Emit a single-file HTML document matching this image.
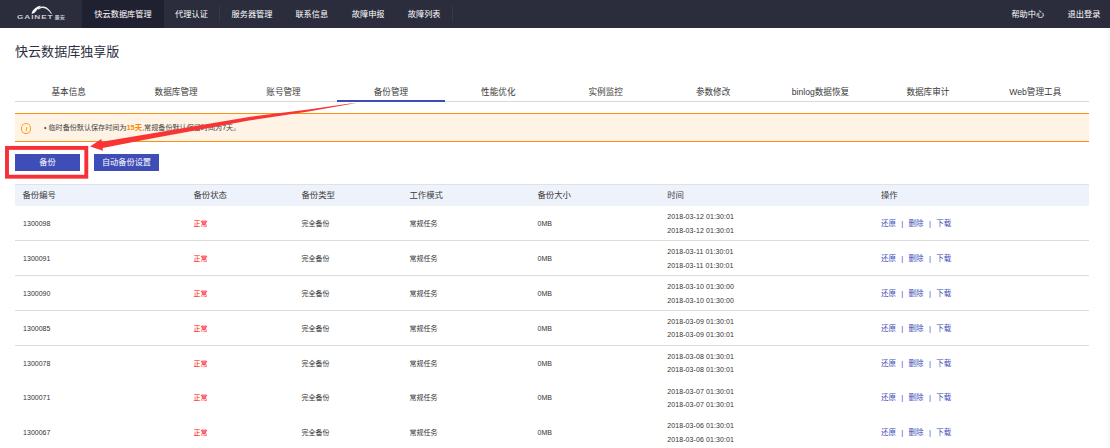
<!DOCTYPE html><html lang="zh"><head><meta charset="utf-8"><title>快云数据库独享版</title><style>
*{margin:0;padding:0;box-sizing:border-box}
html,body{width:1110px;height:448px;overflow:hidden;background:#fff}
body{position:relative;font-family:"Liberation Sans","Noto Sans CJK SC",sans-serif;color:#333;font-size:7px}
.abs{position:absolute;white-space:nowrap}
#nav{position:absolute;left:0;top:0;width:1110px;height:27.75px;background:#2b2d3c}
#nav .it{position:absolute;top:0;height:27.75px;line-height:30.6px;color:#fff;font-size:8.2px;text-align:center}
#nav .it.on{background:#1f2030}
#nav .sep{position:absolute;top:6px;height:16px;width:1px;background:#363849}
#title{left:15px;top:41.7px;font-size:13.05px;line-height:20px;color:#2c2f3e}
#tabs{position:absolute;left:15px;top:82px;width:1074px;height:19.8px;border-bottom:1px solid #d9d9d9}
#tabs .t{position:absolute;top:0;height:19.8px;line-height:21px;width:107.4px;text-align:center;font-size:8.6px;color:#3a3a3a}
#tabs .t.on{border-bottom:2.3px solid #3d4bb8;height:20px}
#alert{position:absolute;left:15px;top:113px;width:1074px;height:29px;background:#fef3e5;border-top:1px solid #fb8f10;border-bottom:1px solid #fb8f10}
#alert .ic{position:absolute;left:6.2px;top:9.4px;width:10px;height:10.4px;border:1px solid #ff9a14;border-radius:50%}
#alert .ic i{position:absolute;left:3.6px;top:2.2px;width:0.9px;height:4.2px;background:#ff9a14;transform:skewX(-12deg)}
#alert .tx{position:absolute;left:29px;top:-0.6px;line-height:29px;font-size:7.1px;color:#444}
#alert .tx b{color:#ff8a00;font-weight:bold;font-size:7.4px}
.btn{position:absolute;top:154px;height:17px;width:65px;background:#3f4db7;color:#fff;font-size:8.2px;line-height:17.9px;text-align:center}
#thead{position:absolute;left:15px;top:183.5px;width:1074px;height:22.1px;background:#eef2fb;border-top:0.6px solid #dde1ea}
.th{position:absolute;top:184.4px;line-height:22px;font-size:8.4px;color:#3c3c3c}
.td{position:absolute;font-size:7px;line-height:12px;color:#333}
.tm{letter-spacing:0.1px}
.red{color:#f00}
.lnk{color:#3d4bb8}
.op{font-size:7.5px}
.op span{display:inline-block;width:15px}
.op i{display:inline-block;width:12.6px;text-align:center;font-style:normal}
.hr{position:absolute;left:15px;width:1074px;height:1px;background:#dcdcdc}
</style></head><body>
<div id="nav">
<svg class="abs" style="left:0;top:0" width="82" height="28" viewBox="0 0 82 28"><path d="M31.6 13.2 C32.2 11.4 33 10 34 9.3 C35.2 7.8 37.4 6.3 40.6 5.7 C40.8 6.2 40.4 6.9 39.6 7.4 C38.4 8.2 37.6 9 37 9.8 C36.4 10.6 35.9 11.4 35.3 12 C34.4 13 33.2 13.7 32.2 13.8 C31.7 13.8 31.5 13.6 31.6 13.2Z" fill="#fafafc"/><path d="M37.6 8.7 C39.6 7 41.6 6.4 43.6 6.5 C45.2 6.6 46.4 7.3 47.6 8.3 C49.4 9.8 51 11.8 51.9 13.7 L51.2 13.9 C50 12.2 48.8 10.8 47.4 9.8 C46 8.8 44.6 8.2 43 8 C41.4 7.9 39.8 8.6 38.4 9.7Z" fill="#ececf0"/><text x="17" y="19" font-family="Liberation Sans, sans-serif" font-size="5.6" font-weight="bold" fill="#c8c8d0" letter-spacing="0.6" textLength="36.5" lengthAdjust="spacingAndGlyphs">GAINET</text><text x="54.5" y="18.8" font-family="Noto Sans CJK SC, sans-serif" font-size="5" font-weight="bold" fill="#c8c8d0" textLength="10.5" lengthAdjust="spacingAndGlyphs">景安</text></svg>
<div class="it on" style="left:82px;width:82px">快云数据库管理</div>
<div class="it" style="left:164px;width:55px">代理认证</div>
<div class="it" style="left:219.5px;width:65px">服务器管理</div>
<div class="it" style="left:284.5px;width:54.6px">联系信息</div>
<div class="it" style="left:340.2px;width:56px">故障申报</div>
<div class="it" style="left:396.2px;width:56px">故障列表</div>
<div class="sep" style="left:219px"></div><div class="sep" style="left:452px"></div>
<div class="it" style="left:1006.8px;width:42px">帮助中心</div><div class="it" style="left:1063px;width:42px">退出登录</div>
</div>
<div id="title" class="abs">快云数据库独享版</div>
<div id="tabs">
<div class="t" style="left:0.0px">基本信息</div>
<div class="t" style="left:107.4px">数据库管理</div>
<div class="t" style="left:214.8px">账号管理</div>
<div class="t on" style="left:322.2px">备份管理</div>
<div class="t" style="left:429.6px">性能优化</div>
<div class="t" style="left:537.0px">实例监控</div>
<div class="t" style="left:644.4px">参数修改</div>
<div class="t" style="left:751.8px">binlog数据恢复</div>
<div class="t" style="left:859.2px">数据库审计</div>
<div class="t" style="left:966.6px">Web管理工具</div>
</div>
<div id="alert"><div class="ic"><i></i></div><div class="tx">•&nbsp;临时备份默认保存时间为<b>15天</b>,常规备份默认保留时间为7天。</div></div>
<div class="btn" style="left:15px">备份</div><div class="btn" style="left:94px">自动备份设置</div>
<div id="thead"></div>
<div class="th abs" style="left:22.5px">备份编号</div>
<div class="th abs" style="left:193.5px">备份状态</div>
<div class="th abs" style="left:301.5px">备份类型</div>
<div class="th abs" style="left:409.5px">工作模式</div>
<div class="th abs" style="left:537.5px">备份大小</div>
<div class="th abs" style="left:667.2px">时间</div>
<div class="th abs" style="left:881px">操作</div>
<div class="td abs" style="left:23.1px;top:218.1px">1300098</div>
<div class="td abs red" style="left:193.5px;top:218.1px">正常</div>
<div class="td abs" style="left:301.5px;top:218.1px">完全备份</div>
<div class="td abs" style="left:409.5px;top:218.1px">常规任务</div>
<div class="td abs" style="left:537.5px;top:218.1px">0MB</div>
<div class="td abs tm" style="left:667.2px;top:211.3px">2018-03-12 01:30:01</div>
<div class="td abs tm" style="left:667.2px;top:224.8px">2018-03-12 01:30:01</div>
<div class="td abs lnk op" style="left:881px;top:218.1px"><span>还原</span><i>|</i><span>删除</span><i>|</i><span>下载</span></div>
<div class="hr" style="top:239.9px"></div>
<div class="td abs" style="left:23.1px;top:253.0px">1300091</div>
<div class="td abs red" style="left:193.5px;top:253.0px">正常</div>
<div class="td abs" style="left:301.5px;top:253.0px">完全备份</div>
<div class="td abs" style="left:409.5px;top:253.0px">常规任务</div>
<div class="td abs" style="left:537.5px;top:253.0px">0MB</div>
<div class="td abs tm" style="left:667.2px;top:246.2px">2018-03-11 01:30:01</div>
<div class="td abs tm" style="left:667.2px;top:259.7px">2018-03-11 01:30:01</div>
<div class="td abs lnk op" style="left:881px;top:253.0px"><span>还原</span><i>|</i><span>删除</span><i>|</i><span>下载</span></div>
<div class="hr" style="top:274.8px"></div>
<div class="td abs" style="left:23.1px;top:287.8px">1300090</div>
<div class="td abs red" style="left:193.5px;top:287.8px">正常</div>
<div class="td abs" style="left:301.5px;top:287.8px">完全备份</div>
<div class="td abs" style="left:409.5px;top:287.8px">常规任务</div>
<div class="td abs" style="left:537.5px;top:287.8px">0MB</div>
<div class="td abs tm" style="left:667.2px;top:281.0px">2018-03-10 01:30:00</div>
<div class="td abs tm" style="left:667.2px;top:294.5px">2018-03-10 01:30:00</div>
<div class="td abs lnk op" style="left:881px;top:287.8px"><span>还原</span><i>|</i><span>删除</span><i>|</i><span>下载</span></div>
<div class="hr" style="top:309.6px"></div>
<div class="td abs" style="left:23.1px;top:322.7px">1300085</div>
<div class="td abs red" style="left:193.5px;top:322.7px">正常</div>
<div class="td abs" style="left:301.5px;top:322.7px">完全备份</div>
<div class="td abs" style="left:409.5px;top:322.7px">常规任务</div>
<div class="td abs" style="left:537.5px;top:322.7px">0MB</div>
<div class="td abs tm" style="left:667.2px;top:315.9px">2018-03-09 01:30:01</div>
<div class="td abs tm" style="left:667.2px;top:329.4px">2018-03-09 01:30:01</div>
<div class="td abs lnk op" style="left:881px;top:322.7px"><span>还原</span><i>|</i><span>删除</span><i>|</i><span>下载</span></div>
<div class="hr" style="top:344.5px"></div>
<div class="td abs" style="left:23.1px;top:357.5px">1300078</div>
<div class="td abs red" style="left:193.5px;top:357.5px">正常</div>
<div class="td abs" style="left:301.5px;top:357.5px">完全备份</div>
<div class="td abs" style="left:409.5px;top:357.5px">常规任务</div>
<div class="td abs" style="left:537.5px;top:357.5px">0MB</div>
<div class="td abs tm" style="left:667.2px;top:350.7px">2018-03-08 01:30:01</div>
<div class="td abs tm" style="left:667.2px;top:364.2px">2018-03-08 01:30:01</div>
<div class="td abs lnk op" style="left:881px;top:357.5px"><span>还原</span><i>|</i><span>删除</span><i>|</i><span>下载</span></div>
<div class="td abs" style="left:23.1px;top:392.4px">1300071</div>
<div class="td abs red" style="left:193.5px;top:392.4px">正常</div>
<div class="td abs" style="left:301.5px;top:392.4px">完全备份</div>
<div class="td abs" style="left:409.5px;top:392.4px">常规任务</div>
<div class="td abs" style="left:537.5px;top:392.4px">0MB</div>
<div class="td abs tm" style="left:667.2px;top:385.6px">2018-03-07 01:30:01</div>
<div class="td abs tm" style="left:667.2px;top:399.1px">2018-03-07 01:30:01</div>
<div class="td abs lnk op" style="left:881px;top:392.4px"><span>还原</span><i>|</i><span>删除</span><i>|</i><span>下载</span></div>
<div class="td abs" style="left:23.1px;top:427.2px">1300067</div>
<div class="td abs red" style="left:193.5px;top:427.2px">正常</div>
<div class="td abs" style="left:301.5px;top:427.2px">完全备份</div>
<div class="td abs" style="left:409.5px;top:427.2px">常规任务</div>
<div class="td abs" style="left:537.5px;top:427.2px">0MB</div>
<div class="td abs tm" style="left:667.2px;top:420.4px">2018-03-06 01:30:01</div>
<div class="td abs tm" style="left:667.2px;top:433.9px">2018-03-06 01:30:01</div>
<div class="td abs lnk op" style="left:881px;top:427.2px"><span>还原</span><i>|</i><span>删除</span><i>|</i><span>下载</span></div>
<svg class="abs" style="left:0;top:0" width="1110" height="448" viewBox="0 0 1110 448"><rect x="7" y="147.9" width="79.3" height="28.8" fill="none" stroke="#f73038" stroke-width="3.9"/><path d="M357 102.7 L348 103.85 L308.6 109.5 L249 116.95 L150 133.7 L101.9 141.8 L101.3 139.1 L90.1 146.6 L103.1 150.7 L102.6 147.9 L150 138.7 L249 120.45 L308.6 111.5 L348 104.55 Z" fill="#f93434"/></svg>
<div style="position:absolute;left:1107px;top:27.75px;width:3px;height:421px;background:#fafafa"></div>
</body></html>
